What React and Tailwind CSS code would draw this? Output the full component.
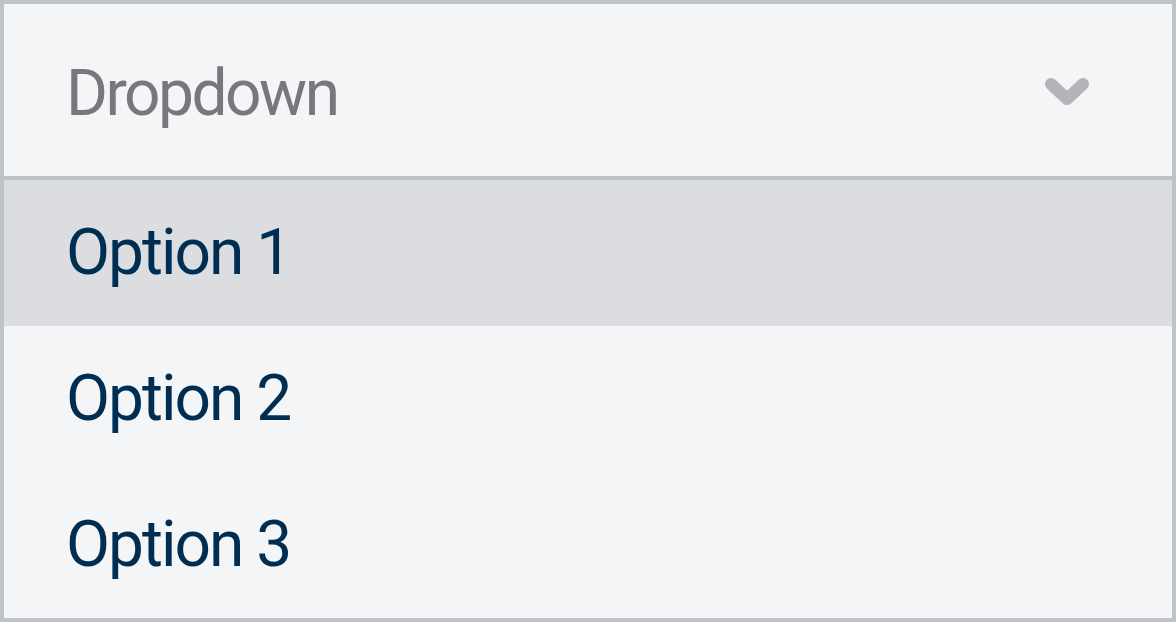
import React from 'react';

const options = ['Option 1', 'Option 2', 'Option 3'];

const App = () => {
  return (
    <div className="w-[1176px] h-[622px] bg-[#f4f5f7] border-4 border-[#bfc2c6] flex flex-col font-['Roboto',sans-serif]">
      <div className="h-[176px] shrink-0 border-b-4 border-[#bfc2c6] flex items-center justify-between pl-[62px] pr-[82px] pt-[8px]">
        <span className="text-[64px] tracking-[-2.5px] text-[#77787b] leading-none">Dropdown</span>
        <svg width="46" height="30" viewBox="0 0 46 30" className="text-[#b2b4b8] -mt-[4px]">
          <polyline
            points="7,7 23,22 39,7"
            fill="none"
            stroke="currentColor"
            strokeWidth="12"
            strokeLinecap="round"
            strokeLinejoin="round"
          />
        </svg>
      </div>
      <div className="flex flex-col flex-1">
        {options.map((opt, i) => (
          <div
            key={opt}
            className={`flex-1 flex items-center pl-[62px] ${i === 0 ? 'bg-[#dcdde0]' : ''}`}
          >
            <span className="text-[64px] tracking-[-2px] text-[#002d52] leading-none">{opt}</span>
          </div>
        ))}
      </div>
    </div>
  );
};

export default App;
